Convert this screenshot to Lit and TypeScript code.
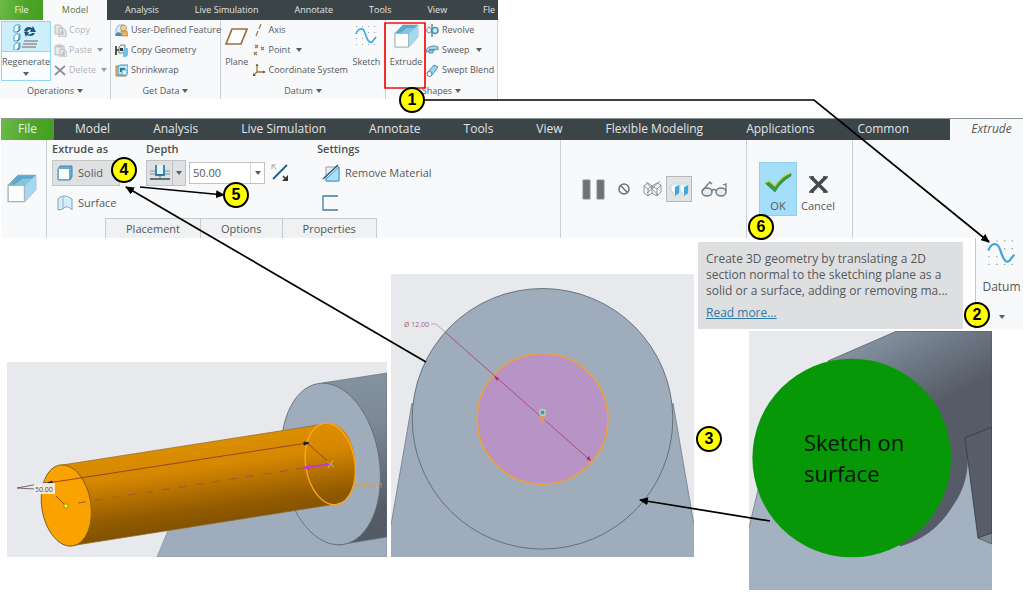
import { LitElement, html, svg, css, nothing } from "lit";
import { customElement, property } from "lit/decorators.js";

const glyphs: Record<string, unknown> = {
  regenerate: svg`<g fill="#fff" stroke="#4a9cc4"><path d="M1 3l2-2h4v5l-2 2H1zM1 12l2-2h4v5l-2 2H1zM1 21l2-2h4v5l-2 2H1z"/></g>
    <path d="M6 2v4l-2 2M6 11v4l-2 2M6 20v4l-2 2" stroke="#1d6f9c" fill="none"/>
    <path d="M11 7c1-4 5-5 8-3l1-2 3 6-6 0 1-2c-2-1-3 0-4 2zM22 9c-1 3-5 4-8 2l-1 2-2-5h5l-1 2c2 1 3 0 4-1z" fill="#1e567f"/>
    <path d="M11 17h14M10 20h14M9 23h14" stroke="#a4a8ac" stroke-width="2"/>`,
  copy: svg`<path d="M1 1h5l2 2v7H1zM5 4h4l3 3v6H5z" fill="#e6e7e8" stroke="#b9bbbd"/><path d="M7 8h3M7 10h3" stroke="#b0b2b4"/>`,
  paste: svg`<path d="M1 2h9v9H1zM3 1h5v2H3zM6 5h4l3 3v5H6z" fill="#e9eaeb" stroke="#b9bbbd"/><path d="M8 9h3M8 11h3" stroke="#b0b2b4"/>`,
  delete: svg`<path d="M1 2c4 3 7 6 10 9M11 2C7 5 4 8 1 11" stroke="#8f9193" stroke-width="2" fill="none"/>`,
  udf: svg`<path d="M1 5l3-4h5v5l-3 4H1z" fill="#d9f0fb" stroke="#5aa9cf" stroke-width=".8"/><circle cx="8.500" cy="4" r="3" fill="#f0cf96" stroke="#b98334" stroke-width=".7"/><path d="M6 7h6l1 5H6z" fill="#e3b269" stroke="#b98334" stroke-width=".7"/><path d="M0 12c1-5 6-5 7 0z" fill="#4d88ad"/>`,
  copygeo: svg`<path d="M1 2v9M1 6h4" stroke="#555" stroke-width="2"/><path d="M4 3l2-2h4v6l-2 2H4z" fill="#e8eef2" stroke="#6f7a82"/><path d="M8 6l2-2h3v7l-2 2H8z" fill="#6cc4ea"/><path d="M5 4h3v3H5z" fill="#333d44"/>`,
  shrink: svg`<path d="M1 2h10v10H1z" fill="#f1c98a" stroke="#a98048"/><path d="M3 3l2-2h8v7l-2 3H3z" fill="#bfe6f7" stroke="#3f93bd"/><path d="M5 4h5v4H5z" fill="#2e6f94"/><path d="M7 6h5v5H7z" fill="#e4f4fb" stroke="#5aa9cf"/>`,
  plane: svg`<path d="M7 2h15l-6 15H1z" fill="#fff" stroke="#9a6f3c" stroke-width="1.700"/>`,
  axis: svg`<path d="M8 0L6 5M5 7L3 12" stroke="#a5814f" stroke-width="1.400"/>`,
  point: svg`<path d="M2 1l3 3M5 1L2 4M8 3l3 3M11 3L8 6M1 8l3 3M4 8l-3 3" stroke="#9b7443" stroke-width="1.200" fill="none"/>`,
  csys: svg`<path d="M4 0v8h8M4 8l-3 3" stroke="#9b7443" stroke-width="1.300" fill="none"/><path d="M2.500 2L4 0l1.500 2zM10 6.500L12.500 8 10 9.500zM0 9v3h3z" fill="#7c5626"/>`,
  sketch: svg`<g fill="#9aa0a4"><path d="M1 1h1v1H1zM7 1h1v1H7zM13 1h1v1h-1zM19 1h1v1h-1zM1 7h1v1H1zM13 7h1v1h-1zM19 7h1v1h-1zM1 13h1v1H1zM7 13h1v1H7zM19 13h1v1h-1zM1 19h1v1H1zM7 19h1v1H7zM13 19h1v1h-1zM19 19h1v1h-1z"/></g>
    <path d="M1 9C3 3 8 2 10 8s4 11 7 9l4-5" fill="none" stroke="#3ea9dc" stroke-width="1.700"/>`,
  extrude: svg`<path d="M1 9L9 1h15v12l-9 10H1z" fill="#a9dcf2" stroke="#7d949f" stroke-width=".6"/><path d="M9 1h15L15 10H1z" fill="#5ea9cb"/><path d="M13 4h9L15 10H5z" fill="#86c5e0"/><path d="M15 10l9-9v12l-9 10z" fill="#a5d9f0"/><path d="M1 9.500h13.500V23H1z" fill="#fcfdfd" stroke="#a9b6bd"/>`,
  revolve: svg`<path d="M3 3C0 4 0 9 3 9s3-5 0-6z" fill="none" stroke="#6f7a82"/><path d="M6 0v13" stroke="#444"/><circle cx="9" cy="6.500" r="3" fill="#cdeaf6" stroke="#3f93bd" stroke-width="1.500"/>`,
  sweep: svg`<path d="M0 6c2-4 8-5 12-3v3c-2-1-4-1-5 0v3H3V7L0 8z" fill="#a5d6ec" stroke="#65889b"/><path d="M3 5h6v2H3z" fill="#5c9cbb"/>`,
  blend: svg`<path d="M1 9L8 1l4 2-6 8-3 1z" fill="#9bd4ef" stroke="#4e91b4"/><ellipse cx="3.500" cy="10" rx="2.500" ry="2.500" fill="#fff" stroke="#5c7f92"/>`,
  solid: svg`<path d="M1 4l2-3h12v11l-2 3H1z" fill="#5fb0d6" stroke="#3d88b0"/><path d="M1.500 3.500h11v11h-11z" fill="#fff" stroke="#6aa5c3"/>`,
  surface: svg`<path d="M1 4c5-5 9-3 14 0v11c-3-4-7-4-9-1l-5 1z" fill="#d5effa" stroke="#86a1af"/><path d="M6 2v12" stroke="#86b4ca"/>`,
  depth: svg`<path d="M0 6h5M15 6h5M0 9h5M15 9h5" stroke="#8b8f92"/><path d="M0 14h20" stroke="#4d5356" stroke-width="1.600"/><path d="M6 0v10h8V0" fill="#e7f5fb" stroke="#2a80ab" stroke-width="1.800"/><path d="M10 10v4" stroke="#2a80ab"/>`,
  flip: svg`<path d="M16 1L2 15" stroke="#1f5f88" stroke-width="1.800"/><path d="M1 1h4M1 1v4M1 1l4 4" stroke="#a5a8aa" fill="none"/><path d="M17 11v6h-6z" fill="#333"/><path d="M12 12l3 3" stroke="#333" stroke-width="1.500"/>`,
  remove: svg`<path d="M4 3h13v14H4z" fill="#eceff1" stroke="#9aa3a8"/><path d="M17 3v14H4v-2z" fill="#a6e2fb" stroke="#4c93b8"/><path d="M1 15L16 1" stroke="#1f5f88" stroke-width="1.500"/>`,
  thicken: svg`<path d="M16 1H1v14h15" fill="none" stroke="#3c7ea3" stroke-width="1.300"/>`,
  pause: svg`<path d="M1 1h7v19H1zM15 1h7v19h-7z" fill="#707173" stroke="#8c8d8f"/>`,
  none: svg`<circle cx="6" cy="6" r="5" fill="none" stroke="#6d6f71" stroke-width="1.500"/><path d="M2.500 2.500l7 7" stroke="#6d6f71" stroke-width="1.500"/>`,
  wire: svg`<path d="M1 5l4-3 4 3v7l-4 3-4-3zM1 5l4 3 4-3M5 8v7M9 5l5-3 4 2v7l-4 4-5-3M9 5l5 3 4-4M14 8v7M3 1l12 13M17 0L4 12" fill="none" stroke="#85888b" stroke-width=".9"/>`,
  preview: svg`<path d="M1 3l4-2 4 2v8l-4 3-4-6z" fill="#fbfdfe" stroke="#9fb4bd" stroke-width=".5"/><path d="M5 5l4-2v8l-4 3z" fill="#40a8dc"/><path d="M1 3l4-2 4 2-4 2z" fill="#d4edf8"/><path d="M10 3l4-2 4 2v8l-4 3-4-6z" fill="#fbfdfe" stroke="#9fb4bd" stroke-width=".5"/><path d="M14 5l4-2v8l-4 3z" fill="#40a8dc"/><path d="M10 3l4-2 4 2-4 2z" fill="#d4edf8"/>`,
  glasses: svg`<g fill="#e3eff6" stroke="#77797b" stroke-width="1.500"><ellipse cx="6" cy="11" rx="5" ry="4"/><ellipse cx="20" cy="11" rx="5" ry="4"/></g><path d="M11 10c1-2 3-2 4 0M1 10L9 1l2 2M25 10V3l-3 1" fill="none" stroke="#77797b" stroke-width="1.300"/>`,
  ok: svg`<path d="M1 11l4-2 6 5C15 8 20 3 27 1v3C20 8 15 13 11 20z" fill="#359a45" stroke="#28783a" stroke-width=".6"/><path d="M1 11l4-2 6 5C15 8 20 3 27 1" fill="none" stroke="#d5dc2c" stroke-width="1.300"/>`,
  cancel: svg`<path d="M2 1l15 15M17 1L2 16" stroke="#454749" stroke-width="3.500"/><path d="M0 1h5M14 1h5M0 16h5M14 16h5" stroke="#454749" stroke-width="1.500"/>`,
};

const icon = (name: string, w: number, h = w, scale = 1) => svg`<svg
  width=${w * scale} height=${h * scale} viewBox="0 0 ${w} ${h}" aria-hidden="true">${glyphs[name]}</svg>`;
const caret = html`<svg class="caret" width="6" height="4" viewBox="0 0 6 4" aria-hidden="true"><path d="M0 0h6L3 4z" fill="#5b5e60"/></svg>`;

const shared = css`
  :host { display: block; font-family: "Open Sans", "Noto Sans", sans-serif; color: #55585b; }
  * { box-sizing: border-box; }
  svg { display: block; flex: none; }
  button { font: inherit; color: inherit; background: none; border: 0; padding: 0; margin: 0; white-space: nowrap; }
  .tabs { display: flex; background: #3b4446; color: #e2e5e6; overflow: hidden; }
  .tabs .file { background: linear-gradient(100deg, #6cba46, #4da428 60%, #43a01f); color: #e9f5e3; }
`;

@customElement("model-ribbon")
export class ModelRibbon extends LitElement {
  static styles = [shared, css`
    :host { max-width: 498px; font-size: 9px; line-height: 12px; }
    .tabs { height: 20px; }
    .tabs button { padding: 0 18px; flex: none; }
    .tabs .file { width: 43px; padding: 0; }
    .tabs .current { width: 64px; padding: 0; background: #f8f9fb; color: #5a7550; }
    .tabs .edge { padding: 0; margin-left: 18px; }
    .groups { display: grid; grid-template-columns: 111px 110px 165px 112px; background: #f8f9fb; }
    .group { border-right: 1px solid #cdd0d2; height: 79px; display: flex; flex-direction: column; }
    .body { display: flex; height: 61px; }
    .name { display: flex; align-items: center; justify-content: center; gap: 3px; height: 18px; padding-top: 2px; }
    .list { display: flex; flex-direction: column; }
    .item { display: flex; align-items: center; height: 20px; gap: 3px; }
    .item .caret { margin-left: 3px; }
    .pic { display: flex; width: 13px; justify-content: center; }
    .off { color: #b3b5b7; gap: 2px; }
    .off .caret { opacity: .6; }
    .big { display: flex; flex-direction: column; align-items: center; }
    .big .art { height: 32px; display: flex; align-items: center; justify-content: center; }
    .big .caption { height: 18px; line-height: 20px; }
    .regen { width: 50px; margin: 1px 3px 0 1px; border: 1px solid #8fd6f7; background: #fafdff; }
    .regen .art { background: #cdeefb; width: 48px; border-bottom: 1px solid #8fd6f7; height: 30px; }
    .regen .caret { margin-top: 2px; }
    .plane { width: 34px; }
    .sketch { width: 40px; }
    .extrude { width: 40px; }
    .narrow { padding-left: 4px; }
  `];

  private item(pic: string, label: string, menu = false, off = false) {
    return html`<button class="item ${off ? "off" : ""}" ?disabled=${off}>
      <span class="pic">${icon(pic, 13)}</span><span>${label}</span>${menu ? caret : nothing}</button>`;
  }

  render() {
    return html`
      <nav class="tabs" aria-label="Ribbon">
        <button class="file">File</button><button class="current">Model</button>
        ${["Analysis", "Live Simulation", "Annotate", "Tools", "View"].map((t) => html`<button>${t}</button>`)}
        <button class="edge">Fle</button>
      </nav>
      <div class="groups">
        <section class="group">
          <div class="body">
            <button class="big regen"><span class="art">${icon("regenerate", 26)}</span><span class="caption">Regenerate</span>${caret}</button>
            <div class="list">
              ${this.item("copy", "Copy", false, true)}${this.item("paste", "Paste", true, true)}${this.item("delete", "Delete", true, true)}
            </div>
          </div>
          <div class="name">Operations ${caret}</div>
        </section>
        <section class="group">
          <div class="body narrow"><div class="list">
            ${this.item("udf", "User-Defined Feature")}${this.item("copygeo", "Copy Geometry")}${this.item("shrink", "Shrinkwrap")}
          </div></div>
          <div class="name">Get Data ${caret}</div>
        </section>
        <section class="group">
          <div class="body">
            <button class="big plane"><span class="art">${icon("plane", 24, 19)}</span><span class="caption">Plane</span></button>
            <div class="list">
              ${this.item("axis", "Axis")}${this.item("point", "Point", true)}${this.item("csys", "Coordinate System")}
            </div>
            <button class="big sketch"><span class="art">${icon("sketch", 22)}</span><span class="caption">Sketch</span></button>
          </div>
          <div class="name">Datum ${caret}</div>
        </section>
        <section class="group">
          <div class="body">
            <button class="big extrude"><span class="art">${icon("extrude", 25)}</span><span class="caption">Extrude</span></button>
            <div class="list">
              ${this.item("revolve", "Revolve")}${this.item("sweep", "Sweep", true)}${this.item("blend", "Swept Blend")}
            </div>
          </div>
          <div class="name">Shapes ${caret}</div>
        </section>
      </div>`;
  }
}

@customElement("extrude-dashboard")
export class ExtrudeDashboard extends LitElement {
  static styles = [shared, css`
    :host { font-size: 11px; line-height: 16px; background: #f8f9fb; }
    .bar { display: flex; font-size: 12px; border-top: 1px solid #8d9597; }
    .tabs { flex: 1; height: 21px; }
    .tabs button { padding: 0 22px 2px 21px; flex: none; }
    .tabs .file { width: 53px; padding: 0 0 2px; }
    .bar .context { width: 73px; font-style: italic; padding: 0 0 2px 10px; }
    .panel { display: grid; grid-template-columns: 46px minmax(514px, 514fr) 186px 106px 170px; height: 98px; }
    .cell { border-right: 1px solid #cdd0d2; display: flex; align-items: center; }
    .cell:last-child { border: 0; }
    .emblem { padding-left: 6px; }
    .main { flex-direction: column; align-items: stretch; justify-content: space-between; }
    .options { display: grid; grid-template-columns: 94px 171px 1fr; padding-left: 5px; }
    h2 { font-size: 11px; line-height: 18px; height: 20px; margin: 0; font-weight: 600; color: #4b4e51; }
    .row { display: flex; align-items: center; height: 26px; gap: 3px; }
    .stack { display: flex; flex-direction: column; gap: 4px; }
    .choice { display: flex; align-items: center; gap: 5px; padding-left: 5px; height: 26px; }
    .choice.on { background: #dfe0e1; border: 1px solid #c3c5c7; padding-left: 4px; margin-right: 26px; }
    .mode { display: flex; align-items: stretch; width: 40px; height: 26px; border: 1px solid #bfc1c3; background: #dfe0e1; }
    .mode .pic { display: flex; align-items: center; justify-content: center; width: 26px; border-right: 1px solid #bfc1c3; }
    .mode .caret { margin: auto; }
    .combo { display: flex; width: 76px; height: 22px; border: 1px solid #c0c2c4; background: #fff; }
    .combo input { width: 60px; border: 0; padding: 0 0 0 3px; font: inherit; color: #55585b; background: none; outline: 0; }
    .combo button { flex: 1; border-left: 1px solid #d5d7d9; display: flex; align-items: center; justify-content: center; }
    .flip { padding-left: 3px; }
    .sheets { display: flex; padding-left: 58px; }
    .sheets button { height: 20px; border: 1px solid #c8cacc; border-bottom: 0; margin-right: -1px; background: #f0f1f2; padding: 0 20px; }
    .play { padding-left: 21px; gap: 13px; }
    .play .toggle { width: 26px; height: 26px; border: 1px solid #b5b7b9; background: #e1e3e5; display: flex; align-items: center; justify-content: center; margin: 0 -4px 0 -9px; }
    .finish { padding-left: 12px; align-items: center; gap: 4px; }
    .act { display: flex; flex-direction: column; align-items: center; justify-content: flex-end; height: 54px; padding-bottom: 2px; gap: 5px; }
    .accept { width: 38px; background: #a3defb; border: 1px solid #8fd0f2; padding-bottom: 1px; }
  `];

  render() {
    return html`
      <div class="bar">
        <nav class="tabs" aria-label="Ribbon">
          <button class="file">File</button>
          ${["Model", "Analysis", "Live Simulation", "Annotate", "Tools", "View", "Flexible Modeling", "Applications", "Common"].map((t) => html`<button>${t}</button>`)}
        </nav>
        <button class="context">Extrude</button>
      </div>
      <div class="panel">
        <div class="cell emblem">${icon("extrude", 25, 25, 1.2)}</div>
        <div class="cell main">
          <div class="options">
            <section><h2>Extrude as</h2>
              <div class="stack">
                <button class="choice on">${icon("solid", 16)}Solid</button>
                <button class="choice">${icon("surface", 16)}Surface</button>
              </div>
            </section>
            <section><h2>Depth</h2>
              <div class="row">
                <button class="mode" aria-label="Depth type"><span class="pic">${icon("depth", 20, 16)}</span>${caret}</button>
                <div class="combo"><input aria-label="Depth value" value="50.00" /><button aria-label="Recent depths">${caret}</button></div>
                <button class="flip" aria-label="Flip direction">${icon("flip", 18)}</button>
              </div>
            </section>
            <section><h2>Settings</h2>
              <div class="stack">
                <button class="choice">${icon("remove", 18)}Remove Material</button>
                <button class="choice" aria-label="Thicken sketch">${icon("thicken", 17, 16)}</button>
              </div>
            </section>
          </div>
          <div class="sheets"><button>Placement</button><button>Options</button><button>Properties</button></div>
        </div>
        <div class="cell play">
          <button aria-label="Pause">${icon("pause", 23, 21)}</button>
          <button aria-label="No preview">${icon("none", 12)}</button>
          <button aria-label="Unattached preview">${icon("wire", 19, 16)}</button>
          <button class="toggle" aria-label="Attached preview">${icon("preview", 19, 15)}</button>
          <button aria-label="Verify">${icon("glasses", 26, 16)}</button>
        </div>
        <div class="cell finish">
          <button class="act accept">${icon("ok", 28, 21)}OK</button>
          <button class="act">${icon("cancel", 19, 17)}Cancel</button>
        </div>
        <div class="cell"></div>
      </div>`;
  }
}

@customElement("feature-tooltip")
export class FeatureTooltip extends LitElement {
  static styles = [shared, css`
    :host { background: #dedfe1; font-size: 12px; line-height: 16px; padding: 9px 0 8px 8px; white-space: nowrap; }
    p { margin: 0 0 6px; }
    a { color: #2f7ba8; }
  `];
  render() {
    return html`<p>Create 3D geometry by translating a 2D<br />section normal to the sketching plane as a<br />solid or a surface, adding or removing ma...</p>
      <a href="#more">Read more...</a>`;
  }
}

@customElement("datum-panel")
export class DatumPanel extends LitElement {
  static styles = [shared, css`
    :host { background: #f8f9fb; border-left: 1px solid #c3c5c7; font-size: 12px; }
    button { width: 100%; height: 100%; display: flex; flex-direction: column; align-items: center; gap: 10px; padding: 1px 0 0 4px; }
    .caret { margin-top: 10px; }
  `];
  render() {
    return html`<button>${icon("sketch", 22, 22, 1.3)}<span>Datum</span>${caret}</button>`;
  }
}

const cylinderView = html`<svg class="view" viewBox="0 0 380 195" role="img" aria-label="Extrusion preview">
  <defs>
    <linearGradient id="gold" gradientUnits="userSpaceOnUse" x1="187" y1="82" x2="198" y2="163"><stop offset="0" stop-color="#dc8e00"/><stop offset=".3" stop-color="#d58700"/><stop offset=".8" stop-color="#935b00"/><stop offset="1" stop-color="#835200"/></linearGradient>
    <linearGradient id="steel" gradientUnits="userSpaceOnUse" x1="350" y1="14" x2="372" y2="178"><stop offset="0" stop-color="#84929f"/><stop offset=".3" stop-color="#7d8895"/><stop offset=".8" stop-color="#565d68"/><stop offset="1" stop-color="#545a65"/></linearGradient>
  </defs>
  <path d="M0 0h380v195H0z" fill="#e8e9ec"/>
  <path d="M150 195l12-29 128-26h90v55z" fill="#9facbb" stroke="#7f8a96" stroke-width=".6"/>
  <path d="M315 21l65-10v164l-49 8z" fill="url(#steel)" stroke="#66707b" stroke-width=".7"/>
  <ellipse cx="323.700" cy="102" rx="48.700" ry="81.400" transform="rotate(-8.700 323.700 102)" fill="#9facbb" stroke="#5f6973" stroke-width=".8"/>
  <path d="M55 103L319.600 61.700C340 60 349 85 348.500 108c-.5 20-8 33-21.200 34.300L63 184z" fill="url(#gold)"/>
  <path d="M55 103L319.600 61.700M63 184l264.300-41.700" stroke="#8a6a2c" stroke-width=".7"/>
  <ellipse cx="323.300" cy="102" rx="24.600" ry="41" transform="rotate(-9 323.300 102)" fill="none" stroke="#ffa51d" stroke-width="1.400"/>
  <ellipse cx="59.300" cy="143.500" rx="24.600" ry="41" transform="rotate(-9 59.300 143.500)" fill="#faa200" stroke="#7b5a20" stroke-width=".9"/>
  <path d="M41 121l259-40 24 21M49 134l10 10" stroke="#8a4025" stroke-width=".9" fill="none"/>
  <path d="M71 141l225-35" stroke="#b0562c" stroke-dasharray="8 9" stroke-width="1.200"/>
  <path d="M10 126l32-6M10 126l18 1" stroke="#5a4653" stroke-width=".8"/>
  <path d="M41 121l4-2v3zM302 81l-5-1v3z" fill="#222" stroke="#222"/>
  <path d="M324 102l-22 3" stroke="#c03ac6" stroke-width="2"/><path d="M295 106l8-4v6z" fill="#c03ac6"/>
  <path d="M320 99l7 6M326 98l-5 8" stroke="#ffb02d"/><circle cx="324" cy="102" r="1.500" fill="#58b0d8"/>
  <circle cx="59" cy="144" r="2.200" fill="#ffe95c" stroke="#a58a00"/>
  <path d="M27 121h21v11H27z" fill="#f3efec" opacity=".9"/>
  <text x="28" y="130" font-size="7" fill="#6a3a4c">50.00</text>
  <text x="346" y="126" font-size="7" fill="#e39a2f">Section 1</text>
</svg>`;

const frontView = html`<svg class="view" viewBox="0 0 303 283" role="img" aria-label="Sketch front view">
  <path d="M0 0h303v283H0z" fill="#e8e9ec"/>
  <path d="M21 129L0 251v32h303v-32L282 129z" fill="#9facbb"/>
  <path d="M21 129L0 251M282 129l21 122" stroke="#6f7b86" stroke-width=".8"/>
  <circle cx="151.500" cy="144.800" r="130.300" fill="#9facbb" stroke="#5d6972" stroke-width=".9"/>
  <circle cx="151.500" cy="144.800" r="65.400" fill="#b894c6" stroke="#f3a032" stroke-width="1.500"/>
  <path d="M40 50h5l9 8" stroke="#b98a90" fill="none" stroke-width=".8"/><path d="M54 58l146 129" stroke="#a5496f" stroke-width=".9"/>
  <path d="M103 102l5 2-2 3zM200 187l-5-2 3-3z" fill="#b02a58"/>
  <path d="M148 144h8M152 140v9M149 142l6 5M155 142l-6 5" stroke="#f3a032" stroke-width=".8"/>
  <path d="M149 136h5v5h-5z" fill="#3f97a8" stroke="#dcecc8"/>
  <text x="13" y="53" font-size="7" fill="#a5636f">Ø 12.00</text>
</svg>`;

const surfaceView = html`<svg class="surface" viewBox="0 0 243 259" role="img" aria-label="Sketch surface">
  <defs><linearGradient id="shade" gradientUnits="userSpaceOnUse" x1="118" y1="8" x2="160" y2="88"><stop offset="0" stop-color="#84929f"/><stop offset=".4" stop-color="#717c89"/><stop offset="1" stop-color="#565c67"/></linearGradient></defs>
  <path d="M0 0h243v259H0z" fill="#e8e9ec"/>
  <path d="M0 197L9 159h90l140-59 4 0v159H0z" fill="#a4b1c1"/><path d="M0 197l9-38" stroke="#7f8a96"/>
  <path d="M79 30L148 0h95v97l-27 10c6 28 0 50-12 67-14 23-30 34-53 41L100 130z" fill="url(#shade)" stroke="#4b525c" stroke-width=".7"/>
  <path d="M216 107l27-11v106l-14 5z" fill="#585e69" stroke="#33393f" stroke-width=".8"/>
  <path d="M229 207l14-5v11z" fill="#7f8995" stroke="#33393f" stroke-width=".6"/>
  <circle cx="102.700" cy="127" r="99.300" fill="#079807"/>
  <text x="55" y="120" font-size="22" fill="#041204">Sketch on</text>
  <text x="55" y="151" font-size="22" fill="#041204">surface</text>
</svg>`;

const callouts = [
  { n: 1, x: 412, y: 100 }, { n: 2, x: 977, y: 315 }, { n: 3, x: 709, y: 439 },
  { n: 4, x: 124, y: 170 }, { n: 5, x: 236, y: 195 }, { n: 6, x: 761, y: 227 },
];

@customElement("callout-badge")
export class CalloutBadge extends LitElement {
  @property({ type: Number }) n = 0;
  static styles = css`
    :host { display: flex; align-items: center; justify-content: center; width: 26px; height: 26px; box-sizing: border-box;
      border: 2px solid #000; border-radius: 50%; background: #ffff00; color: #000;
      font: bold 16px/20px "Liberation Sans", Arial, sans-serif; }
  `;
  render() { return html`${this.n}`; }
}

@customElement("app-root")
export class AppRoot extends LitElement {
  static styles = [shared, css`
    :host { position: relative; background: #fff; min-height: 100vh; overflow: hidden; }
    extrude-dashboard { margin: 19px 0 0 1px; }
    .board { display: grid; grid-template-columns: 687fr 325fr; gap: 4px; padding: 0 0 3px 7px; }
    .board > * { min-width: 0; }
    .views { display: grid; grid-template-columns: 380fr 303fr; gap: 4px; align-items: end; align-self: start; padding-top: 36px; }
    .view, .surface { width: 100%; height: auto; }
    .side { display: flex; flex-direction: column; gap: 2px; }
    .help { display: flex; gap: 12px; }
    feature-tooltip { flex: 1; margin-top: 4px; }
    datum-panel { width: 48px; }
    .target { padding: 0 31px 0 51px; }
    .ink { position: absolute; left: 0; top: 0; pointer-events: none; }
    callout-badge { position: absolute; transform: translate(-50%, -50%); }
  `];

  render() {
    return html`
      <model-ribbon></model-ribbon>
      <extrude-dashboard></extrude-dashboard>
      <main class="board">
        <div class="views">${cylinderView}${frontView}</div>
        <div class="side">
          <div class="help"><feature-tooltip></feature-tooltip><datum-panel></datum-panel></div>
          <div class="target">${surfaceView}</div>
        </div>
      </main>
      <svg class="ink" width="1023" height="594" viewBox="0 0 1023 594" aria-hidden="true">
        <defs><marker id="tip" viewBox="0 0 9 8" refX="8" refY="4" markerWidth="9" markerHeight="8" markerUnits="userSpaceOnUse" orient="auto"><path d="M0 0l9 4-9 4z"/></marker></defs>
        <path d="M385 23h40v65h-40z" fill="none" stroke="#f20d0d" stroke-width="1.700"/>
        <g fill="none" stroke="#000" stroke-width="1.700">
          <path d="M424 100h390l175 142" marker-end="url(#tip)"/>
          <path d="M426 362L126 187" marker-end="url(#tip)"/>
          <path d="M140 187l84 8" marker-end="url(#tip)"/>
          <path d="M770 521L640 500" marker-end="url(#tip)"/>
        </g>
      </svg>
      ${callouts.map((c) => html`<callout-badge .n=${c.n} style="left:${c.x}px;top:${c.y}px"></callout-badge>`)}`;
  }
}
